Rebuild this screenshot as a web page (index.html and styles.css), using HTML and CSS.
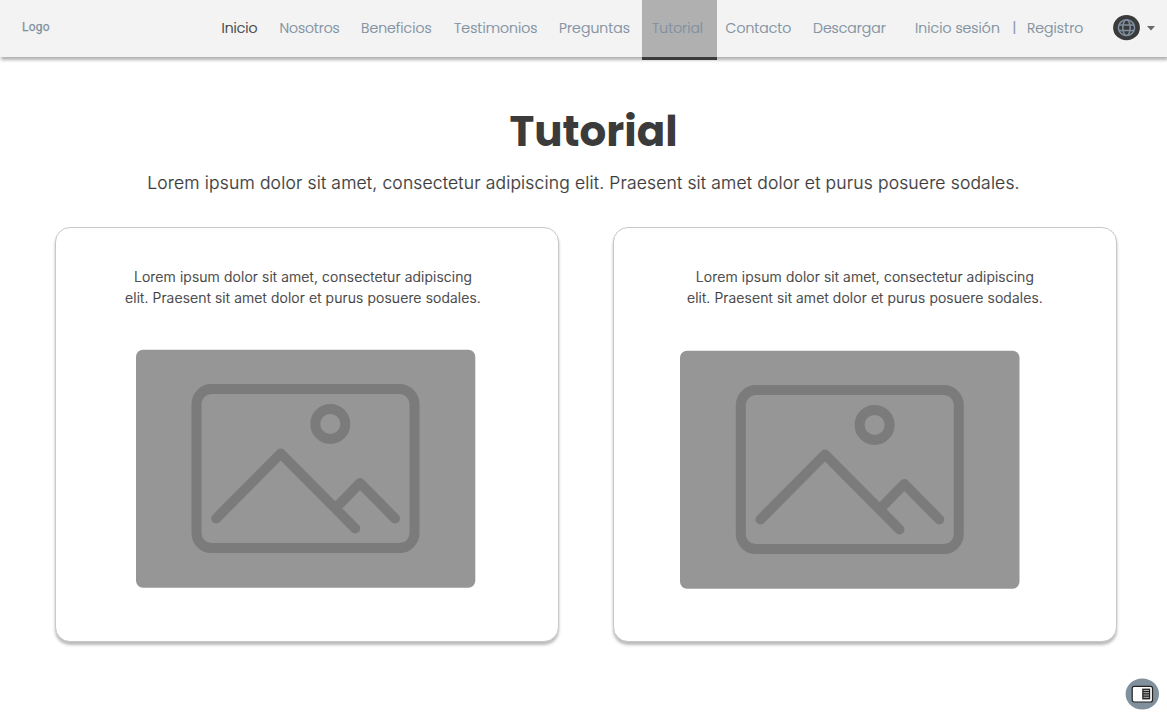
FILE: index.html
```html
<!DOCTYPE html>
<html lang="es">
<head>
<meta charset="utf-8">
<title>Tutorial</title>
<link rel="stylesheet" href="styles.css">
</head>
<body>
<header class="topbar">
  <a class="logo">Logo</a>
  <nav class="nav">
    <a class="link home">Inicio</a>
    <a class="link about">Nosotros</a>
    <a class="link benefits">Beneficios</a>
    <a class="link reviews">Testimonios</a>
    <a class="link faq">Preguntas</a>
    <a class="link active">Tutorial</a>
    <a class="link contact">Contacto</a>
    <a class="link download">Descargar</a>
    <a class="link login">Inicio sesión</a>
    <span class="link divider">|</span>
    <a class="link signup">Registro</a>
  </nav>
  <svg class="globe" viewBox="0 0 27 26"><ellipse cx="13.5" cy="12.7" rx="13.4" ry="12.6" fill="#3b3b3b"/><g fill="none" stroke="#8090a0" stroke-width="1.5"><ellipse cx="13.5" cy="12.7" rx="8.1" ry="7.9"/><ellipse cx="13.5" cy="12.7" rx="3.7" ry="7.9"/><path d="M6 9.9h15M6 15.5h15"/></g></svg>
  <svg class="caret" viewBox="0 0 8 5"><path d="M0 0h8L4 4.5z" fill="#686868"/></svg>
</header>
<main class="page">
  <h1 class="title">Tutorial</h1>
  <p class="intro">Lorem ipsum dolor sit amet, consectetur adipiscing elit. Praesent sit amet dolor et purus posuere sodales.</p>
  <div class="cards">
    <section class="card">
      <p class="copy">Lorem ipsum dolor sit amet, consectetur adipiscing<br>elit. Praesent sit amet dolor et purus posuere sodales.</p>
      <svg class="photo" viewBox="0 0 340 239"><rect x="0" y=".7" width="339.3" height="238" rx="7" fill="#969696"/><g fill="none" stroke="#7b7b7b" stroke-width="10" transform="translate(-.3 .6)"><rect x="60.8" y="39.5" width="218" height="159" rx="15"/><circle cx="194.6" cy="74.3" r="15"/><path stroke-linecap="round" stroke-linejoin="round" d="M80.5 168.8l64.5-65 74.5 75M200 158.5l24.3-25 35 35.3"/></g></svg>
    </section>
    <section class="card second">
      <p class="copy">Lorem ipsum dolor sit amet, consectetur adipiscing<br>elit. Praesent sit amet dolor et purus posuere sodales.</p>
      <svg class="photo" viewBox="0 0 340 239"><rect x="0" y=".7" width="339.5" height="238" rx="7" fill="#969696"/><g fill="none" stroke="#7b7b7b" stroke-width="10" transform="translate(0 .6)"><rect x="60.8" y="39.5" width="218" height="159" rx="15"/><circle cx="194.6" cy="74.3" r="15"/><path stroke-linecap="round" stroke-linejoin="round" d="M80.5 168.8l64.5-65 74.5 75M200 158.5l24.3-25 35 35.3"/></g></svg>
    </section>
  </div>
</main>
<svg class="reader" viewBox="0 0 34 32"><ellipse cx="17.3" cy="16" rx="16.7" ry="15.5" fill="#81909d"/><rect x="7.2" y="8.4" width="20.3" height="15.6" rx="2" fill="#fff" stroke="#222" stroke-width="1.2"/><path d="M17.2 10.6h8v10.8h-8z" fill="#222"/><path d="M18.5 12.4h5.5M18.5 14.7h5.5M18.5 17h5.5M18.5 19.3h5.5" stroke="#ccc" stroke-width=".9"/></svg>
</body>
</html>
```
FILE: styles.css
```css
* { box-sizing: border-box; }
body { margin: 0; height: 721px; overflow: hidden; background: #fff; color: #3b3b3b; font-family: Inter, "Noto Sans", sans-serif; }
.topbar { display: flex; height: 57px; background: #f3f3f3; box-shadow: 1px 3px 3px rgba(0, 0, 0, .3); }
.logo { width: 221.5px; flex: none; padding-left: 22px; font: 400 12px/54px Roboto, sans-serif; letter-spacing: .2px; color: #8090a0; -webkit-text-stroke: .25px; }
.nav { display: flex; height: 60px; }
.link { flex: none; white-space: nowrap; font-family: Poppins, Inter, sans-serif; font-weight: 300; font-size: 14px; line-height: 56px; color: #8090a0; -webkit-text-stroke: .2px; }
.home { width: 58px; color: #3b3b3b; }
.about { width: 81.5px; letter-spacing: -.1px; }
.benefits { width: 93px; letter-spacing: .03px; }
.reviews { width: 105px; letter-spacing: .07px; }
.faq { width: 83px; letter-spacing: .07px; }
.active { width: 75px; padding-left: 10px; background: #b0b0b0; border-bottom: 3px solid #3b3b3b; }
.contact { width: 96px; padding-left: 8.6px; }
.download { width: 102px; }
.login { width: 97.5px; letter-spacing: .07px; }
.divider { width: 14.5px; }
.signup { width: 66px; letter-spacing: .07px; }
.globe { width: 27px; height: 26px; margin: 15px 7px 0 auto; flex: none; }
.caret { width: 8px; height: 5px; margin: 26px 12px 0 0; flex: none; }
.page { padding-top: 50px; }
.title { margin: 0; padding-left: 20px; text-align: center; font: 700 42px/50px Poppins, Inter, sans-serif; }
.intro { margin: 12px 0 0; text-align: center; white-space: nowrap; font-size: 17.5px; font-weight: 300; letter-spacing: .16px; line-height: 28px; -webkit-text-stroke: .2px; }
.cards { display: grid; grid-template-columns: 504px 504px; gap: 53.5px; margin: 30px 0 0 55.4px; }
.card { height: 415px; border: 1px solid #c8c8c8; border-radius: 15px; padding: 38px 0 0 79.6px; background: #fff; box-shadow: 0 3px 3px rgba(0, 0, 0, .27); }
.copy { width: 334px; margin: 0; display: flex; justify-content: center; text-align: center; white-space: nowrap; font-size: 14px; font-weight: 300; letter-spacing: .13px; line-height: 21px; -webkit-text-stroke: .2px; }
.photo { display: block; width: 340px; height: 239px; margin-top: 41px; }
.second { padding-left: 66.5px; }
.second .copy { width: 369px; }
.second .photo { margin-top: 42px; }
.reader { position: absolute; left: 1125px; top: 678px; width: 34px; height: 32px; }
```
